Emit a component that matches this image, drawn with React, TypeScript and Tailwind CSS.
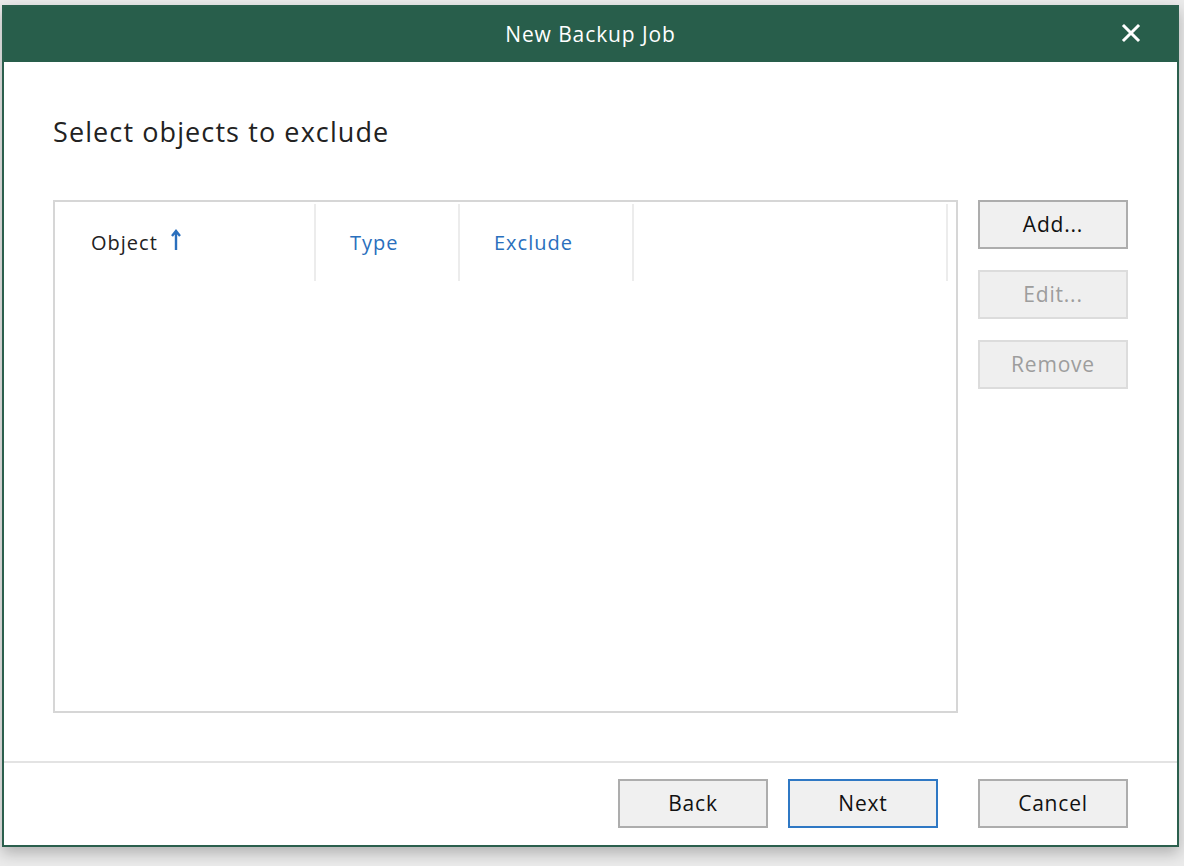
import React from "react";

const font = { fontFamily: '"Open Sans", "Noto Sans", sans-serif' };

function Btn({ children, disabled, primary }: { children: React.ReactNode; disabled?: boolean; primary?: boolean }) {
  const cls = disabled
    ? "border-[#dcdcdc] bg-[#efefef] text-[#9d9d9d]"
    : primary
    ? "border-[#2f78c4] bg-[#f0f0f0] text-[#111]"
    : "border-[#adadad] bg-[#f0f0f0] text-[#111]";
  return (
    <div className={`w-[150px] h-[49px] border-2 flex items-center justify-center text-[21px] tracking-[0.8px] ${cls}`}>
      {children}
    </div>
  );
}

export default function App() {
  return (
    <div className="w-[1184px] h-[866px] bg-[#ebebeb] pt-[5px] pl-[2px]" style={font}>
      <div className="w-[1177px] h-[842px] border-2 border-[#2b5f4d] bg-white flex flex-col shadow-[0_6px_14px_rgba(0,0,0,0.25)]">
        <div className="h-[55px] bg-[#285e4b] relative flex items-center justify-center text-white text-[21px] tracking-[0.9px]">
          New Backup Job
          <svg className="absolute right-[36px] top-[16px]" width="20" height="20" viewBox="0 0 20 20">
            <path d="M3 3 L17 17 M17 3 L3 17" stroke="white" strokeWidth="3" strokeLinecap="square" />
          </svg>
        </div>
        <div className="flex-1 flex flex-col">
          <div className="pl-[49px] pt-[52px] text-[27px] tracking-[1.1px] text-[#222] leading-[36px]">Select objects to exclude</div>
          <div className="flex pl-[49px] pt-[50px] gap-[20px]">
            <div className="w-[905px] h-[513px] border-2 border-[#d6d6d6] pt-[2px]">
              <div className="flex h-[77px] text-[20px] tracking-[1px]">
                <div className="w-[261px] border-r-2 border-[#ececec] flex items-center pl-[36px] text-[#222]">
                  Object
                  <svg className="ml-[13px] -mt-[6px]" width="10" height="22" viewBox="0 0 10 22">
                    <path d="M5 2 V21 M1 7 L5 2 L9 7" stroke="#2a6fbd" strokeWidth="2.4" fill="none" />
                  </svg>
                </div>
                <div className="w-[144px] border-r-2 border-[#ececec] flex items-center pl-[34px] text-[#2a6fbd]">Type</div>
                <div className="w-[174px] border-r-2 border-[#ececec] flex items-center pl-[34px] text-[#2a6fbd]">Exclude</div>
                <div className="w-[314px] border-r-2 border-[#ececec]" />
              </div>
            </div>
            <div className="flex flex-col gap-[21px]">
              <Btn>Add...</Btn>
              <Btn disabled>Edit...</Btn>
              <Btn disabled>Remove</Btn>
            </div>
          </div>
          <div className="mt-auto border-t-2 border-[#e3e3e3] h-[84px] flex items-start justify-end pr-[49px] pt-[16px]">
            <div className="flex gap-[20px]">
              <Btn>Back</Btn>
              <Btn primary>Next</Btn>
            </div>
            <div className="ml-[40px]">
              <Btn>Cancel</Btn>
            </div>
          </div>
        </div>
      </div>
    </div>
  );
}
